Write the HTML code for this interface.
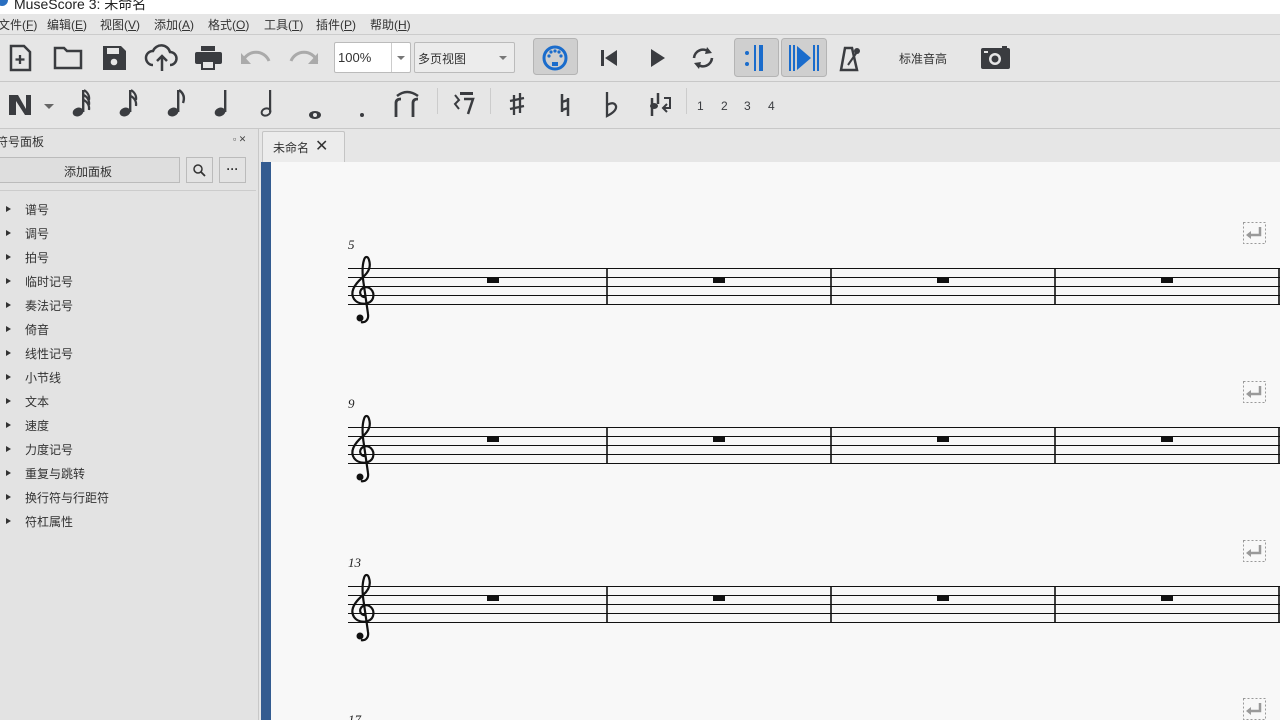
<!DOCTYPE html>
<html><head><meta charset="utf-8"><style>
*{margin:0;padding:0;box-sizing:border-box}
body{width:1280px;height:720px;overflow:hidden;background:#e6e6e6;font-family:"Liberation Sans","Noto Sans CJK SC",sans-serif;position:relative;color:#333}
.a{position:absolute}
.t{font-size:12px;color:#333}
.menu span{position:absolute;top:16px;font-size:12px}
.pal{position:absolute;left:25px;font-size:12px;color:#333}
.tri{position:absolute;left:6px;width:0;height:0;border-left:5px solid #333;border-top:3.5px solid transparent;border-bottom:3.5px solid transparent}
</style></head><body>
<div class="a" style="left:0;top:0;width:1280px;height:14px;background:#fff"></div>
<div class="a" style="left:-4px;top:-6px;width:12px;height:12px;border-radius:6px;background:#2a6fc0"></div>
<div class="a" style="left:14px;top:-6px;font-size:14px;color:#222">MuseScore 3: 未命名</div>
<div class="menu">
<span style="left:-2px">文件(<u>F</u>)</span><span style="left:47px">编辑(<u>E</u>)</span><span style="left:100px">视图(<u>V</u>)</span><span style="left:154px">添加(<u>A</u>)</span><span style="left:208px">格式(<u>O</u>)</span><span style="left:264px">工具(<u>T</u>)</span><span style="left:316px">插件(<u>P</u>)</span><span style="left:370px">帮助(<u>H</u>)</span>
</div>
<div class="a" style="left:0;top:34px;width:1280px;height:1px;background:#ccc"></div>
<div class="a" style="left:0;top:81px;width:1280px;height:1px;background:#c8c8c8"></div>
<div class="a" style="left:0;top:128px;width:1280px;height:1px;background:#c8c8c8"></div>

<svg class="a" style="left:0;top:35px" width="1280" height="46" fill="#3a3c40">
<path d="M11 11h13l6 6v18h-19z" fill="none" stroke="#3a3c40" stroke-width="2.5"/><path d="M20 20v9M15.5 24.5h9" stroke="#3a3c40" stroke-width="2.3"/>
<path d="M55 13h9l3 3h14v17h-26z" fill="none" stroke="#3a3c40" stroke-width="2.5"/>
<path d="M103 11h18l5 5v19h-23z"/><rect x="107" y="13" width="12" height="6" fill="#e6e6e6"/><circle cx="114" cy="27" r="3.3" fill="#e6e6e6"/>
<path d="M153 30a7 7 0 0 1 0-14a9 9 0 0 1 17 1a6.5 6.5 0 0 1 0 13" fill="none" stroke="#3a3c40" stroke-width="2.5"/><path d="M162 36v-14M157 26l5-5 5 5" fill="none" stroke="#3a3c40" stroke-width="2.5"/>
<rect x="201" y="11" width="14" height="5"/><rect x="195" y="17" width="27" height="12" rx="2"/><rect x="201" y="26" width="14" height="9"/><rect x="203" y="27" width="10" height="6" fill="#e6e6e6"/>
<path d="M243 26a14 14 0 0 1 26 0" fill="none" stroke="#aaa" stroke-width="3"/><path d="M241 18v11h10z" fill="#aaa"/>
<path d="M291 26a14 14 0 0 1 26 0" fill="none" stroke="#aaa" stroke-width="3"/><path d="M318 18v11h-10z" fill="#aaa"/>
<rect x="533.5" y="3.5" width="44" height="36" rx="3" fill="#cfcfcf" stroke="#b4b4b4"/>
<circle cx="555" cy="23" r="11" fill="none" stroke="#1a6ccc" stroke-width="3"/><g fill="#1a6ccc"><circle cx="549" cy="21" r="1.6"/><circle cx="561" cy="21" r="1.6"/><circle cx="551" cy="17" r="1.6"/><circle cx="559" cy="17" r="1.6"/><circle cx="555" cy="16" r="1.6"/><rect x="552" y="27" width="6" height="4"/></g>
<rect x="601" y="15" width="3" height="16"/><path d="M617 15v16l-12-8z"/>
<path d="M651 14v18l14-9z"/>
<path d="M694 23a9 9 0 0 1 15-6M712 23a9 9 0 0 1-15 6" fill="none" stroke="#3a3c40" stroke-width="2.6"/><path d="M707 12l5 6-7 1zM699 34l-5-6 7-1z"/>
<rect x="734.5" y="3.5" width="44" height="38" rx="3" fill="#cfcfcf" stroke="#b4b4b4"/><g fill="#1a6ccc"><circle cx="747" cy="18" r="2"/><circle cx="747" cy="29" r="2"/><rect x="754" y="10" width="2" height="26"/><rect x="759" y="10" width="4" height="26"/></g>
<rect x="781.5" y="3.5" width="45" height="38" rx="3" fill="#cfcfcf" stroke="#b4b4b4"/><g fill="#1a6ccc"><rect x="789" y="10" width="2" height="26"/><rect x="793" y="10" width="2" height="26"/><path d="M797 11v24l14-12z"/><rect x="813" y="10" width="2" height="26"/><rect x="817" y="10" width="2" height="26"/></g>
<path d="M845 13h7l5 22h-16z" fill="none" stroke="#3a3c40" stroke-width="2.5"/><path d="M848 30l9-13" stroke="#3a3c40" stroke-width="2"/><circle cx="857" cy="16" r="3"/>
<rect x="981" y="13" width="29" height="21" rx="2"/><rect x="1002" y="11" width="5" height="3"/><circle cx="995" cy="24" r="6" fill="#e6e6e6"/><circle cx="995" cy="24" r="3.5"/><rect x="984" y="16" width="4" height="2" fill="#e6e6e6"/>
</svg>
<div class="a" style="left:334px;top:42px;width:77px;height:31px;background:#fff;border:1px solid #bbb;border-radius:2px"></div>
<div class="a" style="left:391px;top:43px;width:1px;height:29px;background:#ccc"></div>
<div class="a" style="left:397px;top:56px;border-top:4px solid #777;border-left:4px solid transparent;border-right:4px solid transparent"></div>
<div class="a t" style="left:338px;top:50px;font-size:13px">100%</div>
<div class="a" style="left:414px;top:42px;width:101px;height:31px;background:#ececec;border:1px solid #bbb;border-radius:2px"></div>
<div class="a t" style="left:418px;top:50px">多页视图</div>
<div class="a" style="left:499px;top:56px;border-top:4px solid #777;border-left:4px solid transparent;border-right:4px solid transparent"></div>
<div class="a t" style="left:899px;top:50px;font-size:12px">标准音高</div>

<svg class="a" style="left:0;top:82px" width="800" height="46" fill="#3a3c40">
<path d="M9 13h9l8 14v-14h5v20h-6l-9-14v14h-7z"/><path d="M44 22h10l-5 5z" fill="#666"/>
<g><ellipse cx="78" cy="30" rx="5.5" ry="4.3" transform="rotate(-20 78 30)"/><rect x="82" y="8" width="2.4" height="22"/><path d="M84 8q6 4 5 10M84 13q6 4 5 10M84 18q6 4 5 10" fill="none" stroke="#3a3c40" stroke-width="2.2"/></g>
<g><ellipse cx="125" cy="30" rx="5.5" ry="4.3" transform="rotate(-20 125 30)"/><rect x="129" y="8" width="2.4" height="22"/><path d="M131 8q6 4 5 10M131 14q6 4 5 10" fill="none" stroke="#3a3c40" stroke-width="2.2"/></g>
<g><ellipse cx="173" cy="30" rx="5.5" ry="4.3" transform="rotate(-20 173 30)"/><rect x="177" y="8" width="2.4" height="22"/><path d="M179 8q7 5 4 13" fill="none" stroke="#3a3c40" stroke-width="2.4"/></g>
<g><ellipse cx="220" cy="30" rx="5.5" ry="4.3" transform="rotate(-20 220 30)"/><rect x="224" y="8" width="2.4" height="22"/></g>
<g><ellipse cx="266" cy="30" rx="4.5" ry="3.5" transform="rotate(-20 266 30)" fill="none" stroke="#3a3c40" stroke-width="2"/><rect x="269" y="8" width="2.2" height="22"/></g>
<ellipse cx="315" cy="33" rx="6" ry="4"/><ellipse cx="315" cy="33" rx="2" ry="2" fill="#e6e6e6"/>
<circle cx="362" cy="33" r="2"/>
<path d="M397 14q10-8 21 0" fill="none" stroke="#3a3c40" stroke-width="2.5"/><path d="M396 35v-14q0-4 5-4" fill="none" stroke="#3a3c40" stroke-width="2.8"/><path d="M413 35v-14q0-4 5-4" fill="none" stroke="#3a3c40" stroke-width="2.8"/>
<rect x="437" y="6" width="1" height="26" fill="#ccc"/>
<path d="M455 13l4 5-4 4 4 5" fill="none" stroke="#3a3c40" stroke-width="2"/><rect x="460" y="10" width="13" height="3"/><path d="M464 17h9l-5 15" fill="none" stroke="#3a3c40" stroke-width="2.5"/>
<rect x="490" y="6" width="1" height="26" fill="#ccc"/>
<path d="M514 13v20M520 11v20M510 19l14-3M510 27l14-3" stroke="#3a3c40" stroke-width="2.3"/>
<path d="M562 12v18M568 16v18M562 28l6-2M562 20l6-2" stroke="#3a3c40" stroke-width="2.5"/>
<path d="M607 10v24q10-5 9-10q-2-5-9-1" fill="none" stroke="#3a3c40" stroke-width="2.3"/>
<path d="M652 16v18M658 11v11" stroke="#3a3c40" stroke-width="2.5"/><ellipse cx="654" cy="24" rx="4" ry="3"/><path d="M664 16h6v10h-6M667 30l-4-4 4-4" fill="none" stroke="#3a3c40" stroke-width="2"/>
<rect x="686" y="6" width="1" height="26" fill="#ccc"/>
<text x="697" y="28" font-size="12" font-family="Liberation Sans">1</text><text x="721" y="28" font-size="12" font-family="Liberation Sans">2</text><text x="744" y="28" font-size="12" font-family="Liberation Sans">3</text><text x="768" y="28" font-size="12" font-family="Liberation Sans">4</text>
</svg>

<div class="a" style="left:0;top:129px;width:258px;height:591px;background:#e3e3e3"></div>
<div class="a" style="left:258px;top:129px;width:1px;height:591px;background:#c8c8c8"></div>
<div class="a t" style="left:-4px;top:133px">符号面板</div>
<div class="a" style="left:233px;top:134px;font-size:9px;color:#444">▫ ✕</div>
<div class="a" style="left:-1px;top:157px;width:181px;height:26px;background:#dedede;border:1px solid #bbb"></div>
<div class="a t" style="left:64px;top:163px">添加面板</div>
<div class="a" style="left:186px;top:157px;width:27px;height:26px;border:1px solid #bbb"></div>
<svg class="a" style="left:186px;top:157px" width="27" height="26"><circle cx="12" cy="12" r="4" fill="none" stroke="#333" stroke-width="1.5"/><path d="M15 15l4 4" stroke="#333" stroke-width="1.8"/></svg>
<div class="a" style="left:219px;top:157px;width:27px;height:26px;border:1px solid #bbb;text-align:center;font-size:12px;line-height:22px;font-weight:bold">···</div>
<div class="a" style="left:0;top:190px;width:256px;height:1px;background:#ccc"></div>
<div class="tri" style="top:206px"></div><div class="pal" style="top:201px">谱号</div>
<div class="tri" style="top:230px"></div><div class="pal" style="top:225px">调号</div>
<div class="tri" style="top:254px"></div><div class="pal" style="top:249px">拍号</div>
<div class="tri" style="top:278px"></div><div class="pal" style="top:273px">临时记号</div>
<div class="tri" style="top:302px"></div><div class="pal" style="top:297px">奏法记号</div>
<div class="tri" style="top:326px"></div><div class="pal" style="top:321px">倚音</div>
<div class="tri" style="top:350px"></div><div class="pal" style="top:345px">线性记号</div>
<div class="tri" style="top:374px"></div><div class="pal" style="top:369px">小节线</div>
<div class="tri" style="top:398px"></div><div class="pal" style="top:393px">文本</div>
<div class="tri" style="top:422px"></div><div class="pal" style="top:417px">速度</div>
<div class="tri" style="top:446px"></div><div class="pal" style="top:441px">力度记号</div>
<div class="tri" style="top:470px"></div><div class="pal" style="top:465px">重复与跳转</div>
<div class="tri" style="top:494px"></div><div class="pal" style="top:489px">换行符与行距符</div>
<div class="tri" style="top:518px"></div><div class="pal" style="top:513px">符杠属性</div>

<div class="a" style="left:262px;top:131px;width:83px;height:31px;background:#ececec;border:1px solid #c4c4c4;border-bottom:none;border-radius:2px 2px 0 0"></div>
<div class="a t" style="left:273px;top:139px">未命名</div>
<div class="a" style="left:315px;top:136px;font-size:16px;color:#333">✕</div>

<div class="a" style="left:261px;top:162px;width:1019px;height:558px;background:#f8f8f8"></div>
<div class="a" style="left:261px;top:162px;width:10px;height:558px;background:#335b90"></div>
<svg class="a" style="left:0;top:0" width="1280" height="720">
<defs>
<g id="sys">
<g stroke="#111" stroke-width="1"><path d="M348 0.5H1280M348 9.5H1280M348 18.5H1280M348 27.5H1280M348 36.5H1280"/></g>
<g stroke="#111" stroke-width="1.6"><path d="M607 0v37M831 0v37M1055 0v37M1279 0v37"/></g>
<g fill="#111"><rect x="487" y="10" width="12" height="5"/><rect x="713" y="10" width="12" height="5"/><rect x="937" y="10" width="12" height="5"/><rect x="1161" y="10" width="12" height="5"/></g>
<path d="M366 29c-6 1-8-6-3-9c6-3 12 3 10 10c-2 7-14 8-19 1c-5-8 2-16 9-22c6-5 8-11 6-17c-1-4-4-4-5 0c-2 6-2 14 0 26l4 28c1 6-3 9-7 8" fill="none" stroke="#111" stroke-width="2.2"/>
<circle cx="360" cy="50" r="3.5" fill="#111"/>
</g>
<g id="brk"><rect x="1243.5" y="0.5" width="22" height="21" fill="none" stroke="#999" stroke-dasharray="2,2"/><path d="M1260 5v8h-10" fill="none" stroke="#999" stroke-width="2.5"/><path d="M1246 13l5-4v8z" fill="#999"/></g>
</defs>
<use href="#sys" y="268"/><use href="#sys" y="427"/><use href="#sys" y="586"/>
<use href="#brk" y="222"/><use href="#brk" y="381"/><use href="#brk" y="540"/><use href="#brk" y="698"/>
<g font-family="Liberation Serif" font-style="italic" font-size="13" fill="#222"><text x="348" y="249">5</text><text x="348" y="408">9</text><text x="348" y="567">13</text><text x="348" y="724">17</text></g>
</svg>
</body></html>
